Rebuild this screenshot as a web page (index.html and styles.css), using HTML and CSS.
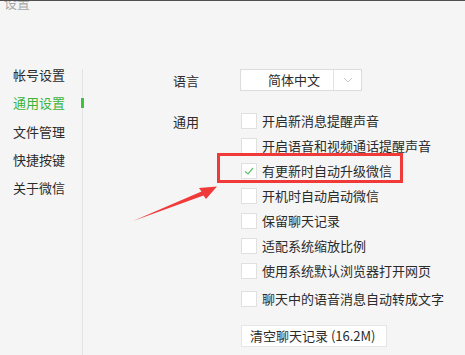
FILE: index.html
```html
<!DOCTYPE html>
<html lang="zh-CN">
<head>
<meta charset="utf-8">
<title>设置</title>
<link rel="stylesheet" href="styles.css">
</head>
<body>
<div class="window">
  <header class="titlebar"><span class="title">设置</span></header>
  <div class="body">
    <nav class="sidebar">
      <ul class="nav">
        <li class="nav-item">帐号设置</li>
        <li class="nav-item active">通用设置</li>
        <li class="nav-item">文件管理</li>
        <li class="nav-item">快捷按键</li>
        <li class="nav-item">关于微信</li>
      </ul>
    </nav>
    <main class="content">
      <div class="row row-lang">
        <div class="row-label">语言</div>
        <div class="select">
          <span class="select-value">简体中文</span>
          <span class="select-arrow">
            <svg width="10" height="6" viewBox="0 0 10 6"><polyline points="1,1 5,5 9,1" fill="none" stroke="#c9c9c9" stroke-width="1"/></svg>
          </span>
        </div>
      </div>
      <div class="row row-general">
        <div class="row-label label-general">通用</div>
        <div class="options">
          <div class="option"><span class="cb"></span><span class="opt-text">开启新消息提醒声音</span></div>
          <div class="option"><span class="cb"></span><span class="opt-text">开启语音和视频通话提醒声音</span></div>
          <div class="option"><span class="cb checked"><svg width="14" height="14" viewBox="0 0 14 14"><polyline points="3,7.5 6,10 11,4" fill="none" stroke="#5cc46a" stroke-width="1.2"/></svg></span><span class="opt-text">有更新时自动升级微信</span></div>
          <div class="option"><span class="cb"></span><span class="opt-text">开机时自动启动微信</span></div>
          <div class="option"><span class="cb"></span><span class="opt-text">保留聊天记录</span></div>
          <div class="option"><span class="cb"></span><span class="opt-text">适配系统缩放比例</span></div>
          <div class="option"><span class="cb"></span><span class="opt-text">使用系统默认浏览器打开网页</span></div>
          <div class="option option-last"><span class="cb"></span><span class="opt-text">聊天中的语音消息自动转成文字</span></div>
          <button class="btn">清空聊天记录 (16.2M)</button>
        </div>
      </div>
    </main>
  </div>
  <div class="highlight"></div>
  <svg class="arrow" width="465" height="355" viewBox="0 0 465 355">
    <polygon points="133,221 201.5,191.5 199,188 217,186.5 206,199 203.5,195.5" fill="#f03a3a"/>
  </svg>
</div>
</body>
</html>
```
FILE: styles.css
```css
* { box-sizing: border-box; }
html, body {
  margin: 0;
  padding: 0;
  background: #f5f5f5;
}
body {
  font-family: "Noto Sans CJK SC", "Noto Sans", sans-serif;
  font-size: 13px;
  color: #333;
}
.window {
  position: relative;
  width: 465px;
  height: 355px;
  overflow: hidden;
  background: #f5f5f5;
}
.titlebar {
  height: 69px;
  border-top: 1px solid #505050;
  overflow: hidden;
}
.title {
  display: block;
  margin: -5px 0 0 4px;
  line-height: 14px;
  font-size: 13px;
  color: #a8a8a8;
}
.body {
  display: flex;
  height: 286px;
}
.sidebar {
  width: 83px;
  border-right: 1px solid #e2e2e2;
  flex-shrink: 0;
}
.nav {
  list-style: none;
  margin: -8px 0 0 0;
  padding: 0;
}
.nav-item {
  position: relative;
  height: 28.3px;
  line-height: 28px;
  padding-left: 13px;
  color: #2b2b2b;
}
.nav-item.active {
  color: #3bb43b;
}
.nav-item.active::after {
  content: "";
  position: absolute;
  right: -2px;
  top: 9px;
  width: 3px;
  height: 10px;
  background: #3cc43c;
}
.content {
  flex: 1;
  padding-left: 90px;
}
.row {
  display: flex;
}
.row-label {
  width: 67px;
  flex-shrink: 0;
  color: #2b2b2b;
}
.row-lang .row-label {
  line-height: 22px;
  padding-top: 1px;
}
.select {
  display: flex;
  width: 122px;
  height: 22px;
  background: #fff;
  border: 1px solid #dcdcdc;
}
.select-value {
  width: 93px;
  padding-left: 27px;
  line-height: 20px;
  color: #2b2b2b;
  border-right: 1px solid #e2e2e2;
}
.select-arrow {
  flex: 1;
  display: flex;
  align-items: center;
  justify-content: center;
  padding-left: 1px;
}
.row-general {
  margin-top: 21px;
}
.label-general {
  line-height: 16px;
  padding-top: 1px;
}
.options {
  display: flex;
  flex-direction: column;
  align-items: flex-start;
  gap: 9px;
}
.option {
  display: flex;
  align-items: center;
  height: 16px;
}
.option-last {
  margin-top: 3px;
}
.cb {
  display: flex;
  align-items: center;
  justify-content: center;
  width: 16px;
  height: 16px;
  background: #fff;
  border: 1px solid #e0e0e0;
  margin-left: 1px;
  flex-shrink: 0;
}
.opt-text {
  margin-left: 5px;
  line-height: 16px;
  color: #2b2b2b;
  white-space: nowrap;
}
.btn {
  margin-top: 9px;
  margin-left: 1px;
  width: 146px;
  height: 22px;
  padding: 0 0 0 8px;
  text-align: left;
  background: #fff;
  border: 1px solid #e6e6e6;
  font-family: "Noto Sans CJK SC", "Noto Sans", sans-serif;
  font-size: 13px;
  line-height: 20px;
  color: #2b2b2b;
}
.highlight {
  position: absolute;
  left: 217px;
  top: 153px;
  width: 186px;
  height: 30px;
  border: 3px solid #f03a3a;
}
.arrow {
  position: absolute;
  left: 0;
  top: 0;
  pointer-events: none;
}
```
